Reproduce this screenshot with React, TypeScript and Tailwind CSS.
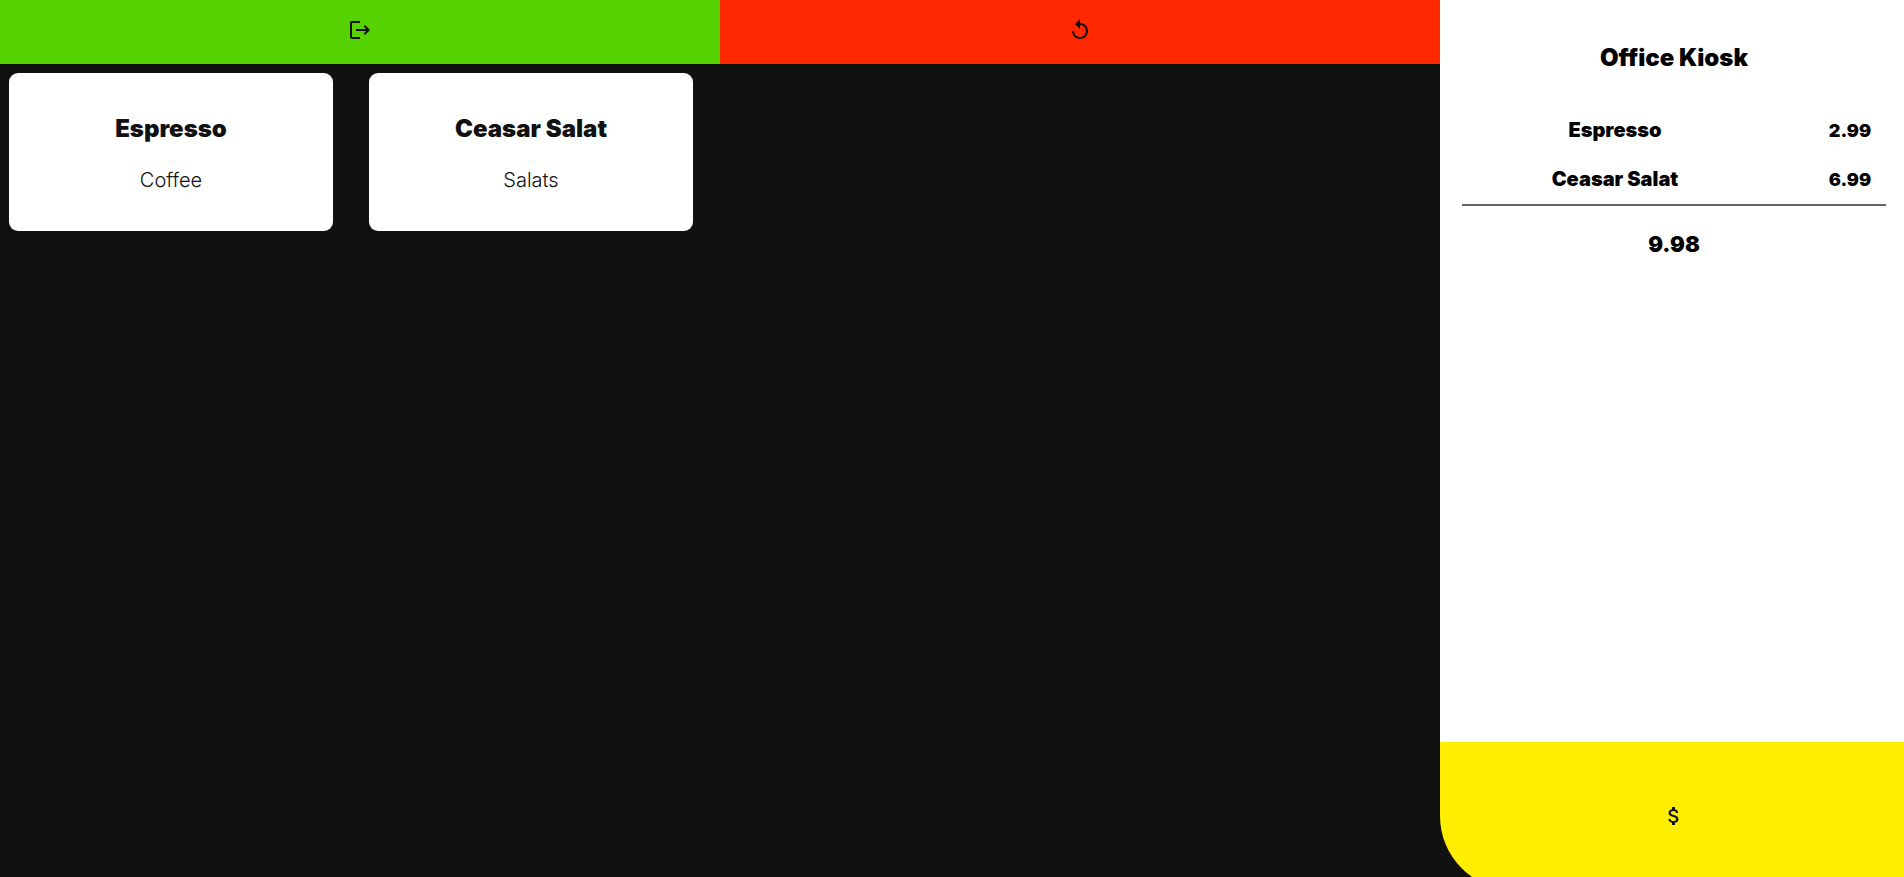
import React from "react";
import { MdAttachMoney, MdLogout, MdReplay } from "react-icons/md";

interface Item {
  name: string;
  category: string;
  price: number;
}

const items: Item[] = [
  { name: "Espresso", category: "Coffee", price: 2.99 },
  { name: "Ceasar Salat", category: "Salats", price: 6.99 },
];

function ItemCard({ item }: { item: Item }) {
  return (
    <button
      type="button"
      className="flex h-[158px] flex-col items-center justify-center gap-[17px] rounded-[9px] bg-white pt-[3px] text-[#111111]"
    >
      <span className="text-2xl leading-9 font-black">{item.name}</span>
      <span className="text-xl leading-8 font-light">{item.category}</span>
    </button>
  );
}

function Receipt() {
  const total = items.reduce((sum, item) => sum + item.price, 0);
  return (
    <section className="flex-1 bg-white pt-10 pr-[18px] pl-[22px] text-center font-black text-black">
      <h1 className="text-2xl leading-9">Office Kiosk</h1>
      <table className="mt-[30px] w-full table-fixed border-b-2 border-[#666666] leading-[49px]">
        <tbody>
          {items.map((item) => (
            <tr key={item.name}>
              <td className="w-[306px] text-xl leading-[49px]">{item.name}</td>
              <td className="pl-[46px] text-lg leading-[49px]">{item.price.toFixed(2)}</td>
            </tr>
          ))}
        </tbody>
      </table>
      <p className="mt-5 text-[22px] leading-9">{total.toFixed(2)}</p>
    </section>
  );
}

export default function App() {
  return (
    <div className="flex h-screen overflow-hidden bg-[#111111] font-['Inter','Open_Sans',sans-serif]">
      <main className="min-w-0 flex-1">
        <div className="grid h-16 grid-cols-2 text-2xl text-[#111111]">
          <button
            type="button"
            aria-label="Log out"
            className="flex items-center justify-center bg-[#55d200] pb-1"
          >
            <MdLogout />
          </button>
          <button
            type="button"
            aria-label="Reset order"
            className="flex items-center justify-center bg-[#ff2800] pb-1"
          >
            <MdReplay />
          </button>
        </div>
        <div className="grid grid-cols-4 gap-9 pt-[9px] pr-[27px] pl-[9px]">
          {items.map((item) => (
            <ItemCard key={item.name} item={item} />
          ))}
        </div>
      </main>
      <aside className="flex w-[464px] shrink-0 flex-col">
        <Receipt />
        <button
          type="button"
          aria-label="Pay"
          className="-mb-[13px] flex h-[148px] shrink-0 items-center justify-center rounded-bl-[74px] bg-[#ffee00] pl-1 text-2xl text-[#111111]"
        >
          <MdAttachMoney />
        </button>
      </aside>
    </div>
  );
}
